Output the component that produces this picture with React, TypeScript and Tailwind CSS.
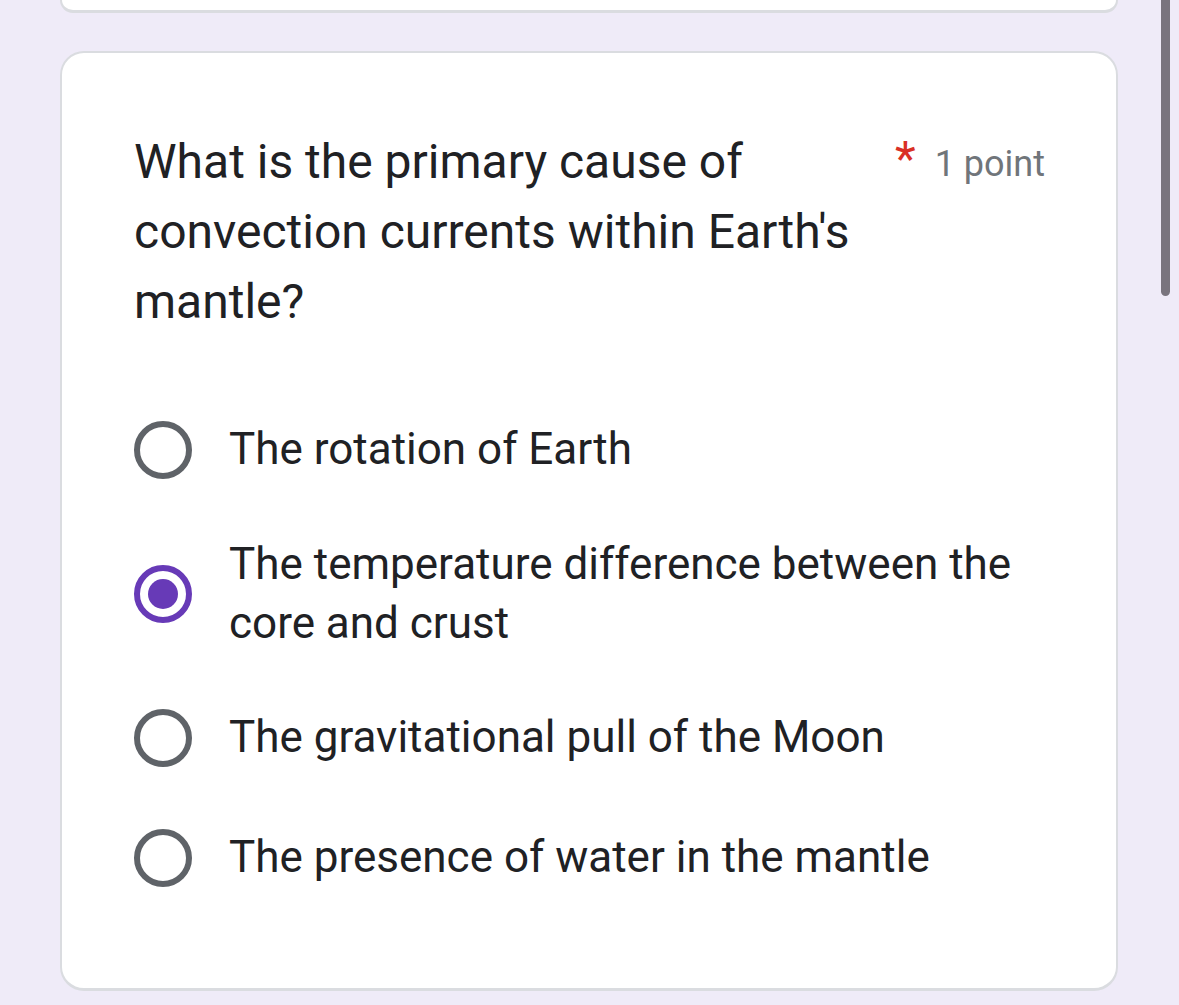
import React from "react";

const options = [
  { text: "The rotation of Earth", mt: "mt-0" },
  { text: "The temperature difference between the core and crust", mt: "mt-[56px]" },
  { text: "The gravitational pull of the Moon", mt: "mt-[55px]" },
  { text: "The presence of water in the mantle", mt: "mt-[61px]" },
];

function Radio({ checked }: { checked: boolean }) {
  if (checked) {
    return (
      <div className="w-[58px] h-[58px] shrink-0 rounded-full border-[6px] border-[#673ab7] flex items-center justify-center">
        <div className="w-[30px] h-[30px] rounded-full bg-[#673ab7]" />
      </div>
    );
  }
  return <div className="w-[58px] h-[58px] shrink-0 rounded-full border-[6px] border-[#5f6368]" />;
}

export default function App() {
  const selected = 1;

  return (
    <div
      className="relative w-[1179px] h-[1005px] overflow-hidden bg-[#efebf8]"
      style={{ fontFamily: "Roboto, 'Noto Sans', sans-serif" }}
    >
      {/* scrollbar */}
      <div className="absolute right-[9px] top-0 w-[9px] h-[296px] rounded-b-full bg-[#79747e]" />

      <div className="flex flex-col pl-[60px] pr-[61px]">
        {/* previous card, only the bottom edge shows */}
        <div className="h-[13px] bg-white border-x-2 border-b-[3px] border-[#dadce0] rounded-b-[24px]" />

        <div className="mt-[38px] h-[940px] bg-white border-2 border-b-[3px] border-[#dadce0] rounded-[24px] px-[72px] pt-[74px]">
          <div className="flex items-start">
            <div className="w-[737px] shrink-0 text-[48px] leading-[70px] text-[#202124]">
              What is the primary cause of convection currents within Earth's mantle?
            </div>
            <div className="flex items-start ml-[24px] whitespace-nowrap">
              <span className="text-[48px] leading-[64px] text-[#d93025]">*</span>
              <span className="ml-[19px] mt-[11px] text-[36px] leading-[52px] text-[#70757a]">1 point</span>
            </div>
          </div>

          <div className="mt-[83px] flex flex-col">
            {options.map((opt, i) => (
              <div key={opt.text} className={`flex items-center gap-[37px] ${opt.mt}`}>
                <Radio checked={i === selected} />
                <div className="w-[800px] text-[44px] leading-[59px] text-[#202124]">{opt.text}</div>
              </div>
            ))}
          </div>
        </div>
      </div>
    </div>
  );
}
